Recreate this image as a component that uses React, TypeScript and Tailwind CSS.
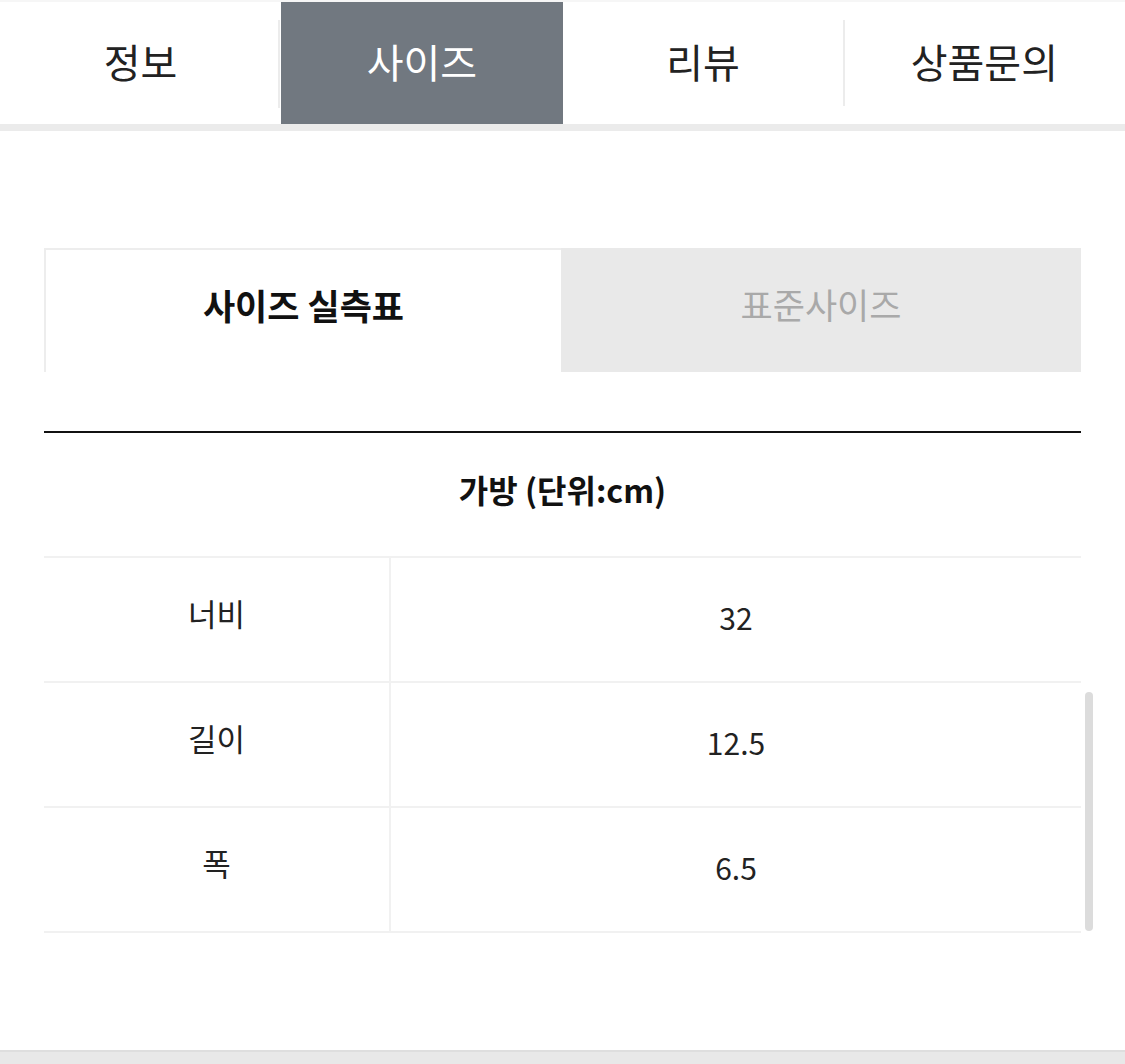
import clsx from 'clsx'

const FONT = "font-['Noto_Sans_CJK_KR','Noto_Sans',sans-serif]"

const TOP_TABS = ['정보', '사이즈', '리뷰', '상품문의']
const ACTIVE = 1

const ROWS = [
  { label: '너비', value: '32' },
  { label: '길이', value: '12.5' },
  { label: '폭', value: '6.5' },
]

export default function App() {
  return (
    <div className={clsx('relative h-[1064px] w-[1125px] overflow-hidden bg-white', FONT)}>
      {/* 상단 탭 */}
      <div className="flex h-[124px] border-t-2 border-[#f6f6f6]">
        {TOP_TABS.map((label, i) => {
          const isActive = i === ACTIVE
          return (
            <div
              key={label}
              className={clsx(
                'relative flex flex-1 items-center justify-center text-[40px] leading-none',
                isActive ? 'bg-[#717880] text-white' : 'text-[#222]',
              )}
            >
              {i === 0 && (
                <span className="absolute right-[1px] top-[18px] h-[88px] w-[2px] bg-[#ececec]" />
              )}
              {i === 3 && (
                <span className="absolute left-[-1px] top-[18px] h-[86px] w-[2px] bg-[#ececec]" />
              )}
              <span className="-mt-1">{label}</span>
            </div>
          )
        })}
      </div>
      <div className="h-[7px] bg-[#ebebeb]" />

      <div className="px-[44px] pt-[117px]">
        {/* 서브 탭 */}
        <div className="flex h-[124px]">
          <div className="flex w-[517px] items-center justify-center border-l-2 border-t-2 border-[#ededed] bg-white pb-3 text-[35px] font-bold text-[#111]">
            사이즈 실측표
          </div>
          <div className="flex flex-1 items-center justify-center bg-[#e9e9e9] pb-3 text-[35px] text-[#a9a9a9]">
            표준사이즈
          </div>
        </div>

        {/* 표 */}
        <div className="mt-[59px] border-t-2 border-[#111]">
          <div className="flex h-[123px] items-center justify-center pb-3 text-[32px] font-bold text-[#111]">
            가방 (단위:cm)
          </div>
          <div className="border-t-2 border-[#f1f1f1]">
            {ROWS.map((row) => (
              <div key={row.label} className="flex h-[125px] border-b-2 border-[#f1f1f1]">
                <div className="flex w-[347px] items-center justify-center border-r-2 border-[#f1f1f1] pb-3 text-[31px] text-[#222]">
                  {row.label}
                </div>
                <div className="flex flex-1 items-center justify-center pb-1 text-[30px] text-[#222]">
                  {row.value}
                </div>
              </div>
            ))}
          </div>
        </div>
      </div>

      {/* 스크롤바 */}
      <div className="absolute left-[1085px] top-[692px] h-[239px] w-[8px] rounded-full bg-[#dcdcdc]" />

      {/* 하단 바 */}
      <div className="absolute bottom-0 left-0 h-[14px] w-full border-t-2 border-[#dedede] bg-[#e8e8e8]" />
    </div>
  )
}
